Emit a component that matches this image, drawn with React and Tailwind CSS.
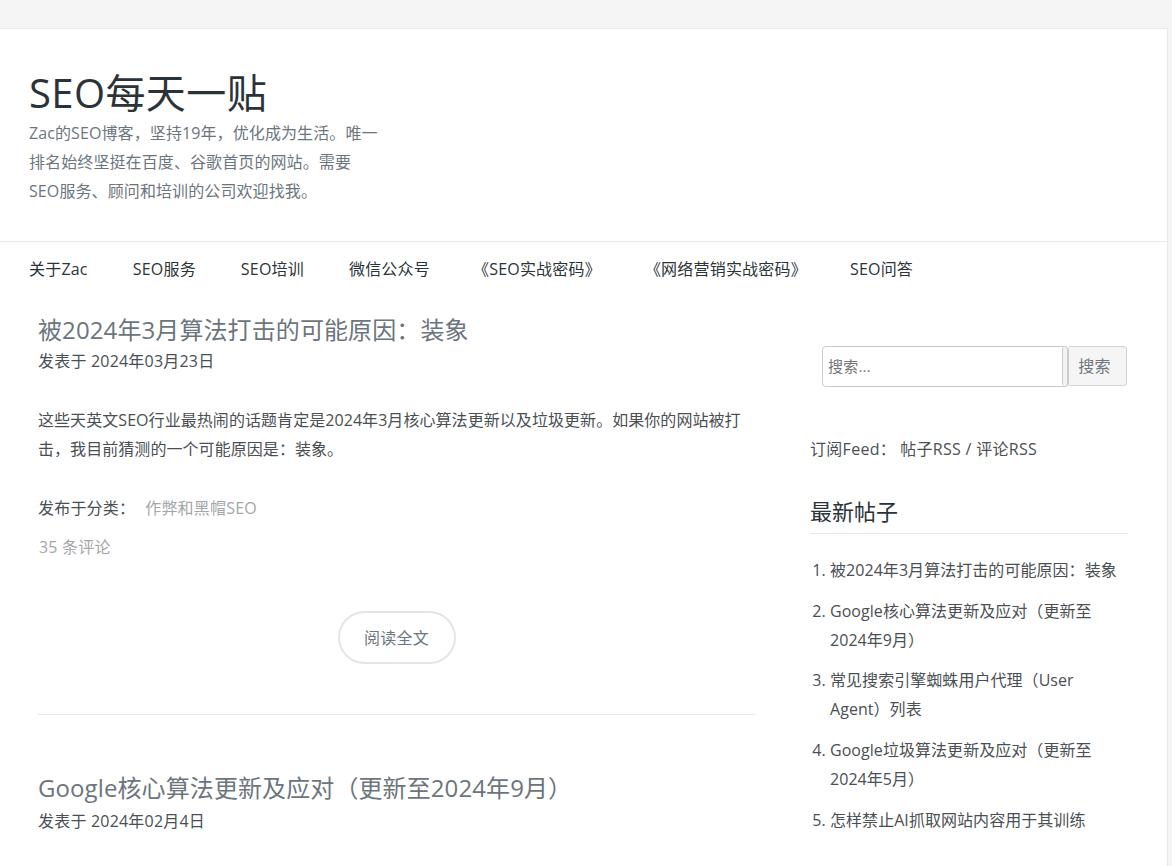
const fontStack = {
  fontFamily: '"Open Sans", "Noto Sans CJK SC", sans-serif',
};

const navItems = [
  { label: "关于Zac", className: "" },
  { label: "SEO服务", className: "" },
  { label: "SEO培训", className: "" },
  { label: "微信公众号", className: "" },
  { label: "《SEO实战密码》", className: "-ml-[2px]" },
  { label: "《网络营销实战密码》", className: "-ml-[1px]" },
  { label: "SEO问答", className: "-ml-[2px]" },
];

const latestPosts = [
  "被2024年3月算法打击的可能原因：装象",
  "Google核心算法更新及应对（更新至2024年9月）",
  "常见搜索引擎蜘蛛用户代理（User Agent）列表",
  "Google垃圾算法更新及应对（更新至2024年5月）",
  "怎样禁止AI抓取网站内容用于其训练",
];

export default function App() {
  return (
    <div
      style={fontStack}
      className="h-[866px] overflow-hidden bg-[#f5f5f5] text-base tracking-[0.2px] text-[#4a4f53]"
    >
      <div className="h-[28px]" />
      <div className="mr-[4px] h-[838px] overflow-hidden border-t border-r border-[#e9e9e9] bg-white">
        <header className="h-[213px] border-b border-[#e9e9e9] pl-[29px] pt-[37px]">
          <h1 className="text-[40px] leading-[53px] tracking-[0.4px] text-[#2b3338]">SEO每天一贴</h1>
          <p className="w-[350px] text-[16px] leading-[29px] tracking-[0.1px] text-[#6c757d]">
            Zac的SEO博客，坚持19年，优化成为生活。唯一排名始终坚挺在百度、谷歌首页的网站。需要SEO服务、顾问和培训的公司欢迎找我。
          </p>
        </header>

        <nav className="flex h-[54px] items-center gap-[45px] pl-[29px]">
          {navItems.map((item) => (
            <a key={item.label} className={`text-[16px] text-[#2b3338] ${item.className}`}>
              {item.label}
            </a>
          ))}
        </nav>

        <div className="flex">
          <main className="ml-[38px] w-[717px]">
            <article className="h-[419px] border-b border-[#e9e9e9] pt-[17px]">
              <h2 className="text-[24px] leading-[34px] tracking-[0.1px] text-[#6c757d]">
                被2024年3月算法打击的可能原因：装象
              </h2>
              <p className="leading-[29px]">发表于 2024年03月23日</p>
              <p className="mt-[30px] leading-[29px] tracking-[0.06px]">
                这些天英文SEO行业最热闹的话题肯定是2024年3月核心算法更新以及垃圾更新。如果你的网站被打击，我目前猜测的一个可能原因是：装象。
              </p>
              <p className="mt-[30px] leading-[29px]">
                发布于分类：<span className="ml-[10px] text-[#a3a7aa]">作弊和黑帽SEO</span>
              </p>
              <p className="mt-[10px] pl-px leading-[29px] text-[#a3a7aa]">35 条评论</p>
              <div className="mt-[49px] flex justify-center">
                <a className="flex h-[53px] w-[118px] items-center justify-center rounded-full border-2 border-[#e5e5e5] text-[#6c757d]">
                  阅读全文
                </a>
              </div>
            </article>
            <article className="pt-[56px]">
              <h2 className="text-[24px] leading-[34px] tracking-[0.1px] text-[#6c757d]">
                Google核心算法更新及应对（更新至2024年9月）
              </h2>
              <p className="mt-[2px] leading-[29px]">发表于 2024年02月4日</p>
            </article>
          </main>

          <aside className="ml-[55px] w-[318px]">
            <form className="ml-[12px] mt-[50px] flex w-[305px]">
              <div className="relative h-[41px] w-[247px] rounded border border-[#cccccc] bg-white pl-[5px] text-[15px] leading-[39px] text-[#757575]">
                搜索...
                <span className="absolute right-0 top-0 h-full w-[6px] rounded-sm border-x border-[#cccccc] bg-[#f3f3f3]" />
              </div>
              <button className="h-[40px] flex-1 rounded-r border border-l-0 border-[#d5d5d5] bg-[#f5f5f5] pr-[6px] text-[16px] text-[#6c757d]">
                搜索
              </button>
            </form>

            <p className="mt-[48px] leading-[29px] tracking-[0.3px]">
              订阅Feed：<span className="ml-[4px]">帖子RSS / 评论RSS</span>
            </p>

            <h3 className="mt-[30px] border-b border-[#e9e9e9] pb-[5px] text-[22px] leading-[34px] tracking-normal text-[#2b3338]">
              最新帖子
            </h3>

            <ol className="mt-[22px] list-decimal pl-[20px] pr-[3px] tracking-[0.05px]">
              {latestPosts.map((post) => (
                <li key={post} className="mb-[12px] leading-[28.8px]">
                  {post}
                </li>
              ))}
            </ol>
          </aside>
        </div>
      </div>
    </div>
  );
}
